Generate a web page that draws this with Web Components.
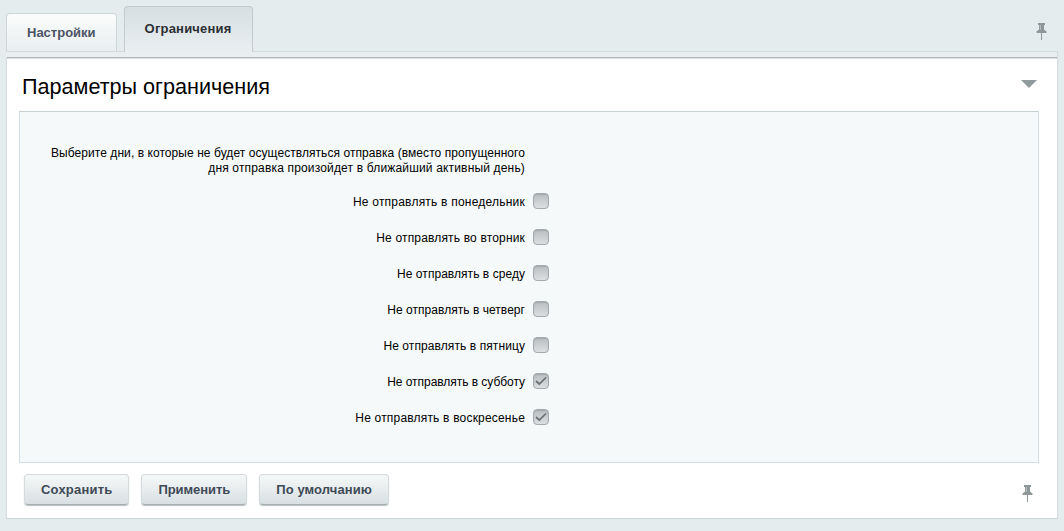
<!DOCTYPE html>
<html lang="ru"><head><meta charset="utf-8"><title>Параметры ограничения</title>
<style>
html,body{margin:0;height:531px;overflow:hidden}
body{background:#e5ecee;font-family:"Liberation Sans",Arial,sans-serif}
</style></head><body>
<admin-page>
  <tab-bar slot="tabs">
    <tab-item>Настройки</tab-item>
    <tab-item active>Ограничения</tab-item>
  </tab-bar>
  <edit-panel heading="Параметры ограничения">
    <form-note>Выберите дни, в которые не будет осуществляться отправка (вместо пропущенного<br><span style="letter-spacing:.165px">дня отправка произойдет в ближайший активный день)</span></form-note>
    <check-row style="--ls:.22px">Не отправлять в понедельник</check-row>
    <check-row style="--ls:.167px">Не отправлять во вторник</check-row>
    <check-row style="--ls:.05px">Не отправлять в среду</check-row>
    <check-row style="--ls:.04px">Не отправлять в четверг</check-row>
    <check-row style="--ls:.09px">Не отправлять в пятницу</check-row>
    <check-row style="--ls:-.04px" checked>Не отправлять в субботу</check-row>
    <check-row style="--ls:.19px" checked>Не отправлять в воскресенье</check-row>
    <action-button slot="actions" style="--ls:.2px">Сохранить</action-button>
    <action-button slot="actions" style="--ls:-.05px">Применить</action-button>
    <action-button slot="actions" style="--ls:.08px">По умолчанию</action-button>
  </edit-panel>
</admin-page>
<script>
const PIN='<svg width="11" height="17" viewBox="0 0 11 17" aria-hidden="true"><path d="M2 0h7v2H8v4.500l2.500 2V10h-10V8.500L3 6.500V2H2z" fill="#8d9698"/><path d="M3.800 2h1.200v5H3.800z" fill="#b4bcbe"/><path d="M5 10h1v7H5z" fill="#8f989a"/></svg>';
function def(name,html,init){customElements.define(name,class extends HTMLElement{
  connectedCallback(){if(this.shadowRoot)return;const r=this.attachShadow({mode:'open'});r.innerHTML=html;if(init)init(this,r);}
});}
def('admin-page',`<style>:host{display:block;padding:6px 6px 0}
.top{display:flex;align-items:flex-end;justify-content:space-between;height:45px}
.pin{display:block;margin:0 11px 11px 0;line-height:0}</style>
<div class="top"><slot name="tabs"></slot><span class="pin">${PIN}</span></div><slot></slot>`);
def('tab-bar',`<style>:host{display:flex;align-items:flex-end;gap:7px;position:relative;z-index:1}</style><slot></slot>`);
def('tab-item',`<style>:host{display:block;box-sizing:border-box;height:38px;padding:11px 20px 0;font:bold 13px/16px "Liberation Sans",Arial,sans-serif;color:#4b5364;background:linear-gradient(#fbfcfc,#e8eef0);border:1px solid #ced6d8;border-bottom:0;border-radius:4px 4px 0 0}
:host([active]){height:46px;margin-bottom:-1px;padding:14px 20px 0;letter-spacing:.2px;color:#2b2f33;background:linear-gradient(#d7dfe2,#e9eff1);border-color:#c2cccf}</style><slot></slot>`);
def('edit-panel',`<style>:host{display:block;box-sizing:border-box;height:467px;border:1px solid #d6dee0;border-top:0;border-bottom:0;background:#fff;box-shadow:0 1px 1px #cfd8da}
.strip{height:6px;background:#e9eff1;border-top:1px solid #d3dbdd;border-right:1px solid #d3dbdd;box-sizing:border-box;margin:0 -1px}
.line{height:2px;background:linear-gradient(#b3b6b6 50%,#dde0e0 50%)}
.head{display:flex;justify-content:space-between;align-items:center;height:52px;padding:3px 12px 0 15px;box-sizing:border-box}
h2{margin:0;font:normal 21.600px/24px "Liberation Sans",Arial,sans-serif;color:#000}
.arrow{width:0;height:0;border:8px solid transparent;border-top:8px solid #8f9a9c;border-bottom:0;margin:0 8px 6px 0}
.box{box-sizing:border-box;height:352px;margin:0 18px 0 12px;background:#f5f9f9;border:1px solid #d3dfe4;border-top-color:#c6cfd2;padding:34px 0 0}
.foot{display:flex;align-items:flex-start;gap:12px;padding:11px 0 0 17px;position:relative}
.pin{position:absolute;right:24px;top:22px;line-height:0}</style>
<div class="strip"></div><div class="line"></div>
<div class="head"><h2></h2><span class="arrow"></span></div>
<div class="box"><slot></slot></div>
<div class="foot"><slot name="actions"></slot><span class="pin">${PIN}</span></div>`,(h,r)=>{r.querySelector('h2').textContent=h.getAttribute('heading');});
def('form-note',`<style>:host{display:block;width:505px;text-align:right;font:12px/15px "Liberation Sans",Arial,sans-serif;letter-spacing:.065px;color:#000;margin-bottom:7px}</style><slot></slot>`);
def('check-row',`<style>:host{display:flex;align-items:center;height:36px;width:530px;font:12px/16px "Liberation Sans",Arial,sans-serif;letter-spacing:var(--ls,0);color:#000}
.t{width:505px;text-align:right;margin-top:2px}
.b{box-sizing:border-box;width:16px;height:16px;margin:-1px 0 0 8px;border:1px solid #a3a9ac;border-radius:4px;background:linear-gradient(#b9bec1,#dcdfe1);box-shadow:inset 0 1px 1px #a3a9ac;line-height:0}
svg{display:block}</style><span class="t"><slot></slot></span><span class="b"></span>`,(h,r)=>{if(h.hasAttribute('checked'))r.querySelector('.b').innerHTML='<svg width="14" height="14" viewBox="0 0 14 14"><path d="M2 7l3.300 3L12 3.500" fill="none" stroke="#6a7072" stroke-width="1.700"/></svg>';});
def('action-button',`<style>:host{display:block;box-sizing:border-box;height:31px;padding:0 16px;font:bold 13px/29px "Liberation Sans",Arial,sans-serif;letter-spacing:var(--ls,0);color:#3f4a57;background:linear-gradient(#f6f8f8,#d8e0e3);border:1px solid #d5dbdd;border-bottom-color:#a7aeb0;border-radius:4px;box-shadow:0 1px 1px #b8bfc1}</style><slot></slot>`);
</script></body></html>
